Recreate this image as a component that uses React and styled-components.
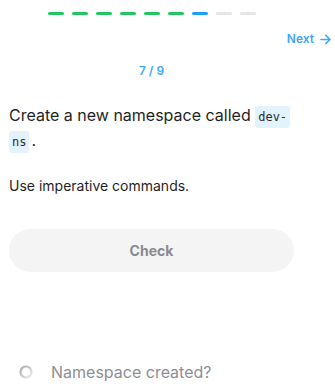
import React from "react";
import styled, { createGlobalStyle } from "styled-components";

const Global = createGlobalStyle`
  html, body { margin: 0; padding: 0; background: #fff; }
  body { font-family: Inter, "Noto Sans", sans-serif; }
`;

const Page = styled.div`
  width: 335px;
  height: 386px;
  overflow: hidden;
  display: flex;
  flex-direction: column;
`;

const Column = styled.div`
  width: 285px;
  margin-left: 9px;
  display: flex;
  flex-direction: column;
`;

const Progress = styled.div`
  display: flex;
  justify-content: center;
  gap: 8px;
  margin-top: 12px;
`;

const Dash = styled.span`
  width: 16px;
  height: 3px;
  border-radius: 2px;
  background: ${(p) => (p.$state === "done" ? "#22c55e" : p.$state === "current" ? "#1da1f2" : "#e6e6e6")};
`;

const NavRow = styled.div`
  display: flex;
  justify-content: flex-end;
  padding-right: 4px;
  margin-top: 16px;
`;

const NextLink = styled.a`
  display: flex;
  align-items: center;
  gap: 6px;
  font-size: 12px;
  font-weight: 600;
  line-height: 16px;
  color: #3ea6f7;
  text-decoration: none;
`;

const Counter = styled.div`
  margin-top: 16px;
  text-align: center;
  font-size: 12px;
  font-weight: 600;
  line-height: 16px;
  color: #3ea6f7;
`;

const Task = styled.p`
  margin: 24px 0 0;
  font-size: 16px;
  line-height: 25px;
  color: #1f1f24;
`;

const Code = styled.code`
  font-family: "DejaVu Sans Mono", "Liberation Mono", monospace;
  font-size: 12px;
  line-height: 14px;
  background: #e3f3fd;
  color: #2a2a33;
  padding: 4px 3px;
  margin-right: 2px;
  border-radius: 3px;
  box-decoration-break: clone;
  -webkit-box-decoration-break: clone;
`;

const Hint = styled.p`
  margin: 24px 0 0;
  font-size: 14px;
  line-height: 18px;
  color: #1f1f24;
`;

const CheckButton = styled.button`
  margin-top: 34px;
  height: 43px;
  width: 100%;
  border: none;
  border-radius: 22px;
  background: #f4f4f4;
  font-family: Inter, "Noto Sans", sans-serif;
  font-size: 14px;
  font-weight: 700;
  color: #8a8a8e;
`;

const Status = styled.div`
  margin-top: 90px;
  display: flex;
  align-items: center;
  gap: 18px;
  padding-left: 19px;
  font-size: 16px;
  line-height: 20px;
  color: #8e8e93;
`;

function Spinner() {
  return (
    <svg width="14" height="14" viewBox="0 0 14 14">
      <defs>
        <linearGradient id="sp" x1="0" y1="0" x2="1" y2="1">
          <stop offset="0" stopColor="#a8a8a8" />
          <stop offset="1" stopColor="#eeeeee" />
        </linearGradient>
      </defs>
      <circle cx="7" cy="7" r="5.5" fill="none" stroke="url(#sp)" strokeWidth="2.2" />
    </svg>
  );
}

const steps = ["done", "done", "done", "done", "done", "done", "current", "todo", "todo"];

export default function App() {
  return (
    <Page>
      <Global />
      <Column>
        <Progress>
          {steps.map((s, i) => (
            <Dash key={i} $state={s} />
          ))}
        </Progress>
      </Column>
      <NavRow>
        <NextLink href="#">
          Next
          <svg width="11" height="11" viewBox="0 0 11 11" fill="none" stroke="#3ea6f7" strokeWidth="1.6" strokeLinecap="round" strokeLinejoin="round">
            <path d="M1 5.5h9M5.8 1.3l4.2 4.2-4.2 4.2" />
          </svg>
        </NextLink>
      </NavRow>
      <Column>
        <Counter>7 / 9</Counter>
        <Task>
          Create a new namespace called <Code>dev-ns</Code>.
        </Task>
        <Hint>Use imperative commands.</Hint>
        <CheckButton>Check</CheckButton>
      </Column>
      <Status>
        <Spinner />
        Namespace created?
      </Status>
    </Page>
  );
}
